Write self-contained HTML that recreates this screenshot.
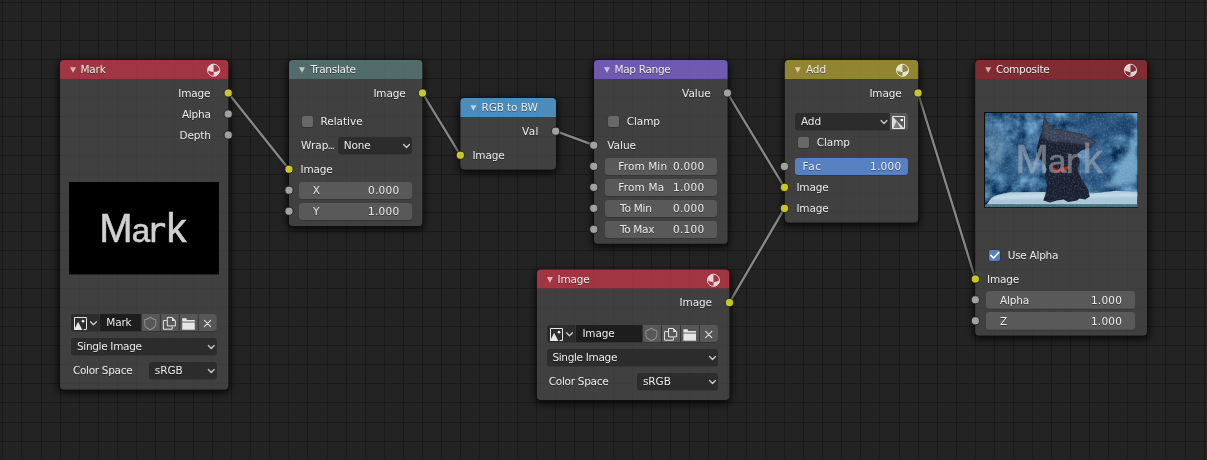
<!DOCTYPE html>
<html lang="en"><head><meta charset="utf-8"><title>Node Editor</title>
<style>html,body{margin:0;padding:0;background:#232323;overflow:hidden}svg{display:block}.t{font-family:"DejaVu Sans","Liberation Sans",sans-serif;font-size:10.5px;fill:#ececec}.ts{filter:drop-shadow(0 1px 0.4px rgba(0,0,0,0.36))}</style></head><body>
<svg width="1207" height="460" viewBox="0 0 1207 460">
<defs><filter id="sh" x="-20%" y="-20%" width="140%" height="140%"><feGaussianBlur stdDeviation="3.6"/></filter><filter id="bl1" x="-30%" y="-30%" width="160%" height="160%"><feGaussianBlur stdDeviation="0.9"/></filter><filter id="mott" x="0" y="0" width="100%" height="100%" color-interpolation-filters="sRGB"><feTurbulence type="fractalNoise" baseFrequency="0.075" numOctaves="3" seed="11"/><feColorMatrix type="matrix" values="0.7 0 0 0 -0.14  0.8 0 0 0 -0.01  0.8 0 0 0 0.15  0 0 0 0 1"/></filter><filter id="bl2" x="-30%" y="-30%" width="160%" height="160%"><feGaussianBlur stdDeviation="2.2"/></filter><filter id="noise" x="0" y="0" width="100%" height="100%" color-interpolation-filters="sRGB"><feTurbulence type="fractalNoise" baseFrequency="0.55" numOctaves="2" seed="7"/><feColorMatrix type="matrix" values="0 0 0 0 0.8  0 0 0 0 0.9  0 0 0 0 1  0 0 0 2.2 -1"/></filter><linearGradient id="skyg" x1="0" y1="0" x2="1" y2="0.6"><stop offset="0" stop-color="#41729a"/><stop offset="0.45" stop-color="#356790"/><stop offset="0.75" stop-color="#2a5982"/><stop offset="1" stop-color="#3f77a2"/></linearGradient></defs>
<rect width="1207" height="460" fill="#232323"/>
<g fill="#1a1a1a" shape-rendering="crispEdges"><rect x="2" y="0" width="1" height="460"/><rect x="21" y="0" width="1" height="460"/><rect x="41" y="0" width="1" height="460"/><rect x="60" y="0" width="1" height="460"/><rect x="79" y="0" width="1" height="460"/><rect x="98" y="0" width="1" height="460"/><rect x="117" y="0" width="1" height="460"/><rect x="136" y="0" width="1" height="460"/><rect x="155" y="0" width="1" height="460"/><rect x="174" y="0" width="1" height="460"/><rect x="193" y="0" width="1" height="460"/><rect x="212" y="0" width="1" height="460"/><rect x="231" y="0" width="1" height="460"/><rect x="250" y="0" width="1" height="460"/><rect x="269" y="0" width="1" height="460"/><rect x="288" y="0" width="1" height="460"/><rect x="307" y="0" width="1" height="460"/><rect x="327" y="0" width="1" height="460"/><rect x="346" y="0" width="1" height="460"/><rect x="365" y="0" width="1" height="460"/><rect x="384" y="0" width="1" height="460"/><rect x="403" y="0" width="1" height="460"/><rect x="422" y="0" width="1" height="460"/><rect x="441" y="0" width="1" height="460"/><rect x="460" y="0" width="1" height="460"/><rect x="479" y="0" width="1" height="460"/><rect x="498" y="0" width="1" height="460"/><rect x="517" y="0" width="1" height="460"/><rect x="536" y="0" width="1" height="460"/><rect x="555" y="0" width="1" height="460"/><rect x="574" y="0" width="1" height="460"/><rect x="593" y="0" width="1" height="460"/><rect x="613" y="0" width="1" height="460"/><rect x="632" y="0" width="1" height="460"/><rect x="651" y="0" width="1" height="460"/><rect x="670" y="0" width="1" height="460"/><rect x="689" y="0" width="1" height="460"/><rect x="708" y="0" width="1" height="460"/><rect x="727" y="0" width="1" height="460"/><rect x="746" y="0" width="1" height="460"/><rect x="765" y="0" width="1" height="460"/><rect x="784" y="0" width="1" height="460"/><rect x="803" y="0" width="1" height="460"/><rect x="822" y="0" width="1" height="460"/><rect x="841" y="0" width="1" height="460"/><rect x="860" y="0" width="1" height="460"/><rect x="879" y="0" width="1" height="460"/><rect x="899" y="0" width="1" height="460"/><rect x="918" y="0" width="1" height="460"/><rect x="937" y="0" width="1" height="460"/><rect x="956" y="0" width="1" height="460"/><rect x="975" y="0" width="1" height="460"/><rect x="994" y="0" width="1" height="460"/><rect x="1013" y="0" width="1" height="460"/><rect x="1032" y="0" width="1" height="460"/><rect x="1051" y="0" width="1" height="460"/><rect x="1070" y="0" width="1" height="460"/><rect x="1089" y="0" width="1" height="460"/><rect x="1108" y="0" width="1" height="460"/><rect x="1127" y="0" width="1" height="460"/><rect x="1146" y="0" width="1" height="460"/><rect x="1165" y="0" width="1" height="460"/><rect x="1185" y="0" width="1" height="460"/><rect x="1204" y="0" width="1" height="460"/><rect x="0" y="2" width="1207" height="1"/><rect x="0" y="21" width="1207" height="1"/><rect x="0" y="40" width="1207" height="1"/><rect x="0" y="59" width="1207" height="1"/><rect x="0" y="78" width="1207" height="1"/><rect x="0" y="97" width="1207" height="1"/><rect x="0" y="116" width="1207" height="1"/><rect x="0" y="136" width="1207" height="1"/><rect x="0" y="155" width="1207" height="1"/><rect x="0" y="174" width="1207" height="1"/><rect x="0" y="193" width="1207" height="1"/><rect x="0" y="212" width="1207" height="1"/><rect x="0" y="231" width="1207" height="1"/><rect x="0" y="250" width="1207" height="1"/><rect x="0" y="269" width="1207" height="1"/><rect x="0" y="288" width="1207" height="1"/><rect x="0" y="307" width="1207" height="1"/><rect x="0" y="326" width="1207" height="1"/><rect x="0" y="345" width="1207" height="1"/><rect x="0" y="364" width="1207" height="1"/><rect x="0" y="383" width="1207" height="1"/><rect x="0" y="402" width="1207" height="1"/><rect x="0" y="422" width="1207" height="1"/><rect x="0" y="441" width="1207" height="1"/></g>
<g><line x1="228.2" y1="93" x2="289" y2="169.2" stroke="#161616" stroke-width="4" stroke-linecap="round" opacity="0.65"/><line x1="228.2" y1="93" x2="289" y2="169.2" stroke="#888888" stroke-width="2.3" stroke-linecap="round"/>
<line x1="422.4" y1="93" x2="460.4" y2="155.2" stroke="#161616" stroke-width="4" stroke-linecap="round" opacity="0.65"/><line x1="422.4" y1="93" x2="460.4" y2="155.2" stroke="#888888" stroke-width="2.3" stroke-linecap="round"/>
<line x1="555.8" y1="131.2" x2="593.8" y2="145.2" stroke="#161616" stroke-width="4" stroke-linecap="round" opacity="0.65"/><line x1="555.8" y1="131.2" x2="593.8" y2="145.2" stroke="#888888" stroke-width="2.3" stroke-linecap="round"/>
<line x1="727.4" y1="93" x2="784.5" y2="187.4" stroke="#161616" stroke-width="4" stroke-linecap="round" opacity="0.65"/><line x1="727.4" y1="93" x2="784.5" y2="187.4" stroke="#888888" stroke-width="2.3" stroke-linecap="round"/>
<line x1="729.4" y1="302.6" x2="784.5" y2="208.4" stroke="#161616" stroke-width="4" stroke-linecap="round" opacity="0.65"/><line x1="729.4" y1="302.6" x2="784.5" y2="208.4" stroke="#888888" stroke-width="2.3" stroke-linecap="round"/>
<line x1="918" y1="93" x2="975.4" y2="279" stroke="#161616" stroke-width="4" stroke-linecap="round" opacity="0.65"/><line x1="918" y1="93" x2="975.4" y2="279" stroke="#888888" stroke-width="2.3" stroke-linecap="round"/></g>
<g><clipPath id="nc0"><path clip-rule="evenodd" d="M0,0 H1207 V460 H0 Z M64,60 H224.3 A4,4 0 0 1 228.3,64 V385.5 A4,4 0 0 1 224.3,389.5 H64 A4,4 0 0 1 60,385.5 V64 A4,4 0 0 1 64,60 Z"/></clipPath>
<g clip-path="url(#nc0)"><rect x="58" y="61" width="172.3" height="332.5" rx="6" fill="#000" opacity="0.72" filter="url(#sh)"/></g>
<path d="M60,79 H228.3 V385.5 A4,4 0 0 1 224.3,389.5 H64 A4,4 0 0 1 60,385.5 V79 Z" fill="rgba(76,76,76,0.71)"/>
<path d="M64,60 H224.3 A4,4 0 0 1 228.3,64 V79 H60 V64 A4,4 0 0 1 64,60 Z" fill="#c53b4b" fill-opacity="0.78"/>
<path d="M70,67.2 h6 l-3,5.6 Z" fill="#fff" fill-opacity="0.62"/>
<g transform="translate(213.6,70.2)" fill="#f4f4f4" fill-opacity="0.84"><circle r="6.05" fill="none" stroke="#f4f4f4" stroke-opacity="0.84" stroke-width="1"/><path d="M0,-6.05 A6.05,6.05 0 0 0 -6.05,0 Q-3.63,1.7 0,1.9 Z"/><path d="M0,6.05 A6.05,6.05 0 0 0 6.05,0 Q3.63,1.7 0,1.9 Z"/></g>
<clipPath id="nc1"><path clip-rule="evenodd" d="M0,0 H1207 V460 H0 Z M293,60 H418.4 A4,4 0 0 1 422.4,64 V222 A4,4 0 0 1 418.4,226 H293 A4,4 0 0 1 289,222 V64 A4,4 0 0 1 293,60 Z"/></clipPath>
<g clip-path="url(#nc1)"><rect x="287" y="61" width="137.4" height="169" rx="6" fill="#000" opacity="0.72" filter="url(#sh)"/></g>
<path d="M289,79 H422.4 V222 A4,4 0 0 1 418.4,226 H293 A4,4 0 0 1 289,222 V79 Z" fill="rgba(76,76,76,0.71)"/>
<path d="M293,60 H418.4 A4,4 0 0 1 422.4,64 V79 H289 V64 A4,4 0 0 1 293,60 Z" fill="#5f817f" fill-opacity="0.78"/>
<path d="M299,67.2 h6 l-3,5.6 Z" fill="#fff" fill-opacity="0.62"/>
<clipPath id="nc2"><path clip-rule="evenodd" d="M0,0 H1207 V460 H0 Z M464.4,98 H552 A4,4 0 0 1 556,102 V165.6 A4,4 0 0 1 552,169.6 H464.4 A4,4 0 0 1 460.4,165.6 V102 A4,4 0 0 1 464.4,98 Z"/></clipPath>
<g clip-path="url(#nc2)"><rect x="458.4" y="99" width="99.6" height="74.6" rx="6" fill="#000" opacity="0.72" filter="url(#sh)"/></g>
<path d="M460.4,117 H556 V165.6 A4,4 0 0 1 552,169.6 H464.4 A4,4 0 0 1 460.4,165.6 V117 Z" fill="rgba(76,76,76,0.71)"/>
<path d="M464.4,98 H552 A4,4 0 0 1 556,102 V117 H460.4 V102 A4,4 0 0 1 464.4,98 Z" fill="#58abe5" fill-opacity="0.78"/>
<path d="M470.4,105.2 h6 l-3,5.6 Z" fill="#fff" fill-opacity="0.62"/>
<clipPath id="nc3"><path clip-rule="evenodd" d="M0,0 H1207 V460 H0 Z M598,60 H723.6 A4,4 0 0 1 727.6,64 V239.8 A4,4 0 0 1 723.6,243.8 H598 A4,4 0 0 1 594,239.8 V64 A4,4 0 0 1 598,60 Z"/></clipPath>
<g clip-path="url(#nc3)"><rect x="592" y="61" width="137.6" height="186.8" rx="6" fill="#000" opacity="0.72" filter="url(#sh)"/></g>
<path d="M594,79 H727.6 V239.8 A4,4 0 0 1 723.6,243.8 H598 A4,4 0 0 1 594,239.8 V79 Z" fill="rgba(76,76,76,0.71)"/>
<path d="M598,60 H723.6 A4,4 0 0 1 727.6,64 V79 H594 V64 A4,4 0 0 1 598,60 Z" fill="#866ada" fill-opacity="0.78"/>
<path d="M604,67.2 h6 l-3,5.6 Z" fill="#fff" fill-opacity="0.62"/>
<clipPath id="nc4"><path clip-rule="evenodd" d="M0,0 H1207 V460 H0 Z M788.8,60 H914.2 A4,4 0 0 1 918.2,64 V218.6 A4,4 0 0 1 914.2,222.6 H788.8 A4,4 0 0 1 784.8,218.6 V64 A4,4 0 0 1 788.8,60 Z"/></clipPath>
<g clip-path="url(#nc4)"><rect x="782.8" y="61" width="137.4" height="165.6" rx="6" fill="#000" opacity="0.72" filter="url(#sh)"/></g>
<path d="M784.8,79 H918.2 V218.6 A4,4 0 0 1 914.2,222.6 H788.8 A4,4 0 0 1 784.8,218.6 V79 Z" fill="rgba(76,76,76,0.71)"/>
<path d="M788.8,60 H914.2 A4,4 0 0 1 918.2,64 V79 H784.8 V64 A4,4 0 0 1 788.8,60 Z" fill="#b1a236" fill-opacity="0.78"/>
<path d="M794.8,67.2 h6 l-3,5.6 Z" fill="#fff" fill-opacity="0.62"/>
<g transform="translate(902.5,70.3)" fill="#f4f4f4" fill-opacity="0.84"><circle r="6.05" fill="none" stroke="#f4f4f4" stroke-opacity="0.84" stroke-width="1"/><path d="M0,-6.05 A6.05,6.05 0 0 0 -6.05,0 Q-3.63,1.7 0,1.9 Z"/><path d="M0,6.05 A6.05,6.05 0 0 0 6.05,0 Q3.63,1.7 0,1.9 Z"/></g>
<clipPath id="nc5"><path clip-rule="evenodd" d="M0,0 H1207 V460 H0 Z M979.2,60 H1143 A4,4 0 0 1 1147,64 V331.6 A4,4 0 0 1 1143,335.6 H979.2 A4,4 0 0 1 975.2,331.6 V64 A4,4 0 0 1 979.2,60 Z"/></clipPath>
<g clip-path="url(#nc5)"><rect x="973.2" y="61" width="175.8" height="278.6" rx="6" fill="#000" opacity="0.72" filter="url(#sh)"/></g>
<path d="M975.2,79 H1147 V331.6 A4,4 0 0 1 1143,335.6 H979.2 A4,4 0 0 1 975.2,331.6 V79 Z" fill="rgba(76,76,76,0.71)"/>
<path d="M979.2,60 H1143 A4,4 0 0 1 1147,64 V79 H975.2 V64 A4,4 0 0 1 979.2,60 Z" fill="#9c2f39" fill-opacity="0.78"/>
<path d="M985.2,67.2 h6 l-3,5.6 Z" fill="#fff" fill-opacity="0.62"/>
<g transform="translate(1130.5,70.3)" fill="#f4f4f4" fill-opacity="0.84"><circle r="6.05" fill="none" stroke="#f4f4f4" stroke-opacity="0.84" stroke-width="1"/><path d="M0,-6.05 A6.05,6.05 0 0 0 -6.05,0 Q-3.63,1.7 0,1.9 Z"/><path d="M0,6.05 A6.05,6.05 0 0 0 6.05,0 Q3.63,1.7 0,1.9 Z"/></g>
<clipPath id="nc6"><path clip-rule="evenodd" d="M0,0 H1207 V460 H0 Z M540.9,269.5 H725.3 A4,4 0 0 1 729.3,273.5 V396 A4,4 0 0 1 725.3,400 H540.9 A4,4 0 0 1 536.9,396 V273.5 A4,4 0 0 1 540.9,269.5 Z"/></clipPath>
<g clip-path="url(#nc6)"><rect x="534.9" y="270.5" width="196.4" height="133.5" rx="6" fill="#000" opacity="0.72" filter="url(#sh)"/></g>
<path d="M536.9,288.5 H729.3 V396 A4,4 0 0 1 725.3,400 H540.9 A4,4 0 0 1 536.9,396 V288.5 Z" fill="rgba(76,76,76,0.71)"/>
<path d="M540.9,269.5 H725.3 A4,4 0 0 1 729.3,273.5 V288.5 H536.9 V273.5 A4,4 0 0 1 540.9,269.5 Z" fill="#c53b4b" fill-opacity="0.78"/>
<path d="M546.9,277.1 h6 l-3,5.6 Z" fill="#fff" fill-opacity="0.62"/>
<g transform="translate(713.45,280.3)" fill="#f4f4f4" fill-opacity="0.84"><circle r="6.05" fill="none" stroke="#f4f4f4" stroke-opacity="0.84" stroke-width="1"/><path d="M0,-6.05 A6.05,6.05 0 0 0 -6.05,0 Q-3.63,1.7 0,1.9 Z"/><path d="M0,6.05 A6.05,6.05 0 0 0 6.05,0 Q3.63,1.7 0,1.9 Z"/></g></g>
<g><rect x="71" y="314.8" width="145.8" height="17" rx="3.2" fill="#303030" opacity="0.8"/>
<path d="M74.2,314 H99 V331 H74.2 A3.2,3.2 0 0 1 71,327.8 V317.2 A3.2,3.2 0 0 1 74.2,314 Z" fill="#2c2c2c"/>
<g transform="translate(74,317)"><path d="M9.6,12.5 H12.5 V0.5 H0.5 V12.5" fill="none" stroke="#e6e6e6" stroke-width="1"/><path d="M0,13 L4.1,4.8 L8.4,13 Z" fill="#e6e6e6"/><circle cx="9" cy="4.2" r="1.4" fill="#e6e6e6"/></g>
<path d="M90.6,321.7 L93.5,324.7 L96.4,321.7" fill="none" stroke="#cacaca" stroke-width="1.3" stroke-linecap="round" stroke-linejoin="round"/>
<rect x="100" y="314" width="40.8" height="17" rx="0" fill="#1d1d1d" />
<rect x="141.8" y="314" width="18" height="17" rx="0" fill="#575757" />
<rect x="160.8" y="314" width="18" height="17" rx="0" fill="#575757" />
<rect x="179.8" y="314" width="18" height="17" rx="0" fill="#575757" />
<path d="M198.8,314 H213.6 A3.2,3.2 0 0 1 216.8,317.2 V327.8 A3.2,3.2 0 0 1 213.6,331 H198.8 V314 Z" fill="#575757"/>
<path d="M150.2,317.3 Q152.8,319.4 155.7,319.7 V324.4 Q155.3,327.6 150.2,329.7 Q145.1,327.6 144.7,324.4 V319.7 Q147.6,319.4 150.2,317.3 Z" fill="none" stroke="#8c8c8c" stroke-width="1.1" stroke-linejoin="round"/>
<g transform="translate(160.8,314)" fill="none" stroke="#e6e6e6" stroke-width="1"><path d="M6,6.6 H2.6 V15.2 H11.4 V12.4"/><path d="M6.5,3.5 H11.4 L14.6,6.7 V11.9 H6.5 Z"/><path d="M11.2,3.5 V6.9 H14.6 Z" fill="#e6e6e6" stroke="none"/></g>
<g transform="translate(179.8,314)" fill="#e6e6e6"><path d="M2.4,4.2 H6.8 V6 H15 V7.4 H2.4 Z"/><path d="M2.4,7.4 H15 V8.6 H2.4 Z" fill="#b4b4b4"/><rect x="2.4" y="8.8" width="12.6" height="6.9"/></g>
<path d="M204.4,320.4 l6.2,6.2 M210.6,320.4 l-6.2,6.2" stroke="#dcdcdc" stroke-width="1.15" stroke-linecap="round"/>
<path d="M74.2,338.8 H213.6 A3.2,3.2 0 0 1 216.8,342 V352.6 A3.2,3.2 0 0 1 213.6,355.8 H74.2 A3.2,3.2 0 0 1 71,352.6 V342 A3.2,3.2 0 0 1 74.2,338.8 Z" fill="#333" opacity="0.8"/>
<path d="M74.2,338 H213.6 A3.2,3.2 0 0 1 216.8,341.2 V351.8 A3.2,3.2 0 0 1 213.6,355 H74.2 A3.2,3.2 0 0 1 71,351.8 V341.2 A3.2,3.2 0 0 1 74.2,338 Z" fill="#2c2c2c"/>
<path d="M208.4,345.5 L211.3,348.5 L214.2,345.5" fill="none" stroke="#cacaca" stroke-width="1.3" stroke-linecap="round" stroke-linejoin="round"/>
<path d="M152.2,362.8 H213.6 A3.2,3.2 0 0 1 216.8,366 V376.6 A3.2,3.2 0 0 1 213.6,379.8 H152.2 A3.2,3.2 0 0 1 149,376.6 V366 A3.2,3.2 0 0 1 152.2,362.8 Z" fill="#333" opacity="0.8"/>
<path d="M152.2,362 H213.6 A3.2,3.2 0 0 1 216.8,365.2 V375.8 A3.2,3.2 0 0 1 213.6,379 H152.2 A3.2,3.2 0 0 1 149,375.8 V365.2 A3.2,3.2 0 0 1 152.2,362 Z" fill="#2c2c2c"/>
<path d="M208.4,369.5 L211.3,372.5 L214.2,369.5" fill="none" stroke="#cacaca" stroke-width="1.3" stroke-linecap="round" stroke-linejoin="round"/>
<rect x="301.7" y="116.2" width="11.6" height="11.7" rx="2.4" fill="#2f2f2f" opacity="0.85"/>
<rect x="302" y="116" width="11" height="11" rx="2" fill="#686868" />
<path d="M341.5,137.8 H408.8 A3.2,3.2 0 0 1 412,141 V151.6 A3.2,3.2 0 0 1 408.8,154.8 H341.5 A3.2,3.2 0 0 1 338.3,151.6 V141 A3.2,3.2 0 0 1 341.5,137.8 Z" fill="#333" opacity="0.8"/>
<path d="M341.5,137 H408.8 A3.2,3.2 0 0 1 412,140.2 V150.8 A3.2,3.2 0 0 1 408.8,154 H341.5 A3.2,3.2 0 0 1 338.3,150.8 V140.2 A3.2,3.2 0 0 1 341.5,137 Z" fill="#2c2c2c"/>
<path d="M403.6,144.5 L406.5,147.5 L409.4,144.5" fill="none" stroke="#cacaca" stroke-width="1.3" stroke-linecap="round" stroke-linejoin="round"/>
<rect x="299" y="182.8" width="113" height="17" rx="3.2" fill="#2e2e2e" opacity="0.7"/>
<rect x="299" y="182" width="113" height="17" rx="3.2" fill="#595959" />
<rect x="299" y="203.8" width="113" height="17" rx="3.2" fill="#2e2e2e" opacity="0.7"/>
<rect x="299" y="203" width="113" height="17" rx="3.2" fill="#595959" />
<rect x="607.7" y="116.2" width="11.6" height="11.7" rx="2.4" fill="#2f2f2f" opacity="0.85"/>
<rect x="608" y="116" width="11" height="11" rx="2" fill="#686868" />
<rect x="605" y="158.8" width="112" height="17" rx="3.2" fill="#2e2e2e" opacity="0.7"/>
<rect x="605" y="158" width="112" height="17" rx="3.2" fill="#595959" />
<rect x="605" y="179.8" width="112" height="17" rx="3.2" fill="#2e2e2e" opacity="0.7"/>
<rect x="605" y="179" width="112" height="17" rx="3.2" fill="#595959" />
<rect x="605" y="200.8" width="112" height="17" rx="3.2" fill="#2e2e2e" opacity="0.7"/>
<rect x="605" y="200" width="112" height="17" rx="3.2" fill="#595959" />
<rect x="605" y="221.8" width="112" height="17" rx="3.2" fill="#2e2e2e" opacity="0.7"/>
<rect x="605" y="221" width="112" height="17" rx="3.2" fill="#595959" />
<path d="M798.2,113.8 H889.5 V130.8 H798.2 A3.2,3.2 0 0 1 795,127.6 V117 A3.2,3.2 0 0 1 798.2,113.8 Z" fill="#333" opacity="0.8"/>
<path d="M798.2,113 H889.5 V130 H798.2 A3.2,3.2 0 0 1 795,126.8 V116.2 A3.2,3.2 0 0 1 798.2,113 Z" fill="#2c2c2c"/>
<path d="M881.1,120.5 L884,123.5 L886.9,120.5" fill="none" stroke="#cacaca" stroke-width="1.3" stroke-linecap="round" stroke-linejoin="round"/>
<path d="M890,113 H904.8 A3.2,3.2 0 0 1 908,116.2 V126.8 A3.2,3.2 0 0 1 904.8,130 H890 V113 Z" fill="#575757"/>
<g transform="translate(892,116)"><path d="M0.5,0.5 H12.5 V12.5 H0.5 Z" fill="none" stroke="#e8e8e8" stroke-width="1"/><path d="M1,1 L12,12 H1 Z" fill="#dcdcdc"/><path d="M1.4,12 L4.4,5 L8.6,12 Z" fill="#7c7c7c"/><circle cx="9.8" cy="4.1" r="1.35" fill="#f0f0f0"/></g>
<rect x="797.7" y="137.2" width="11.6" height="11.7" rx="2.4" fill="#2f2f2f" opacity="0.85"/>
<rect x="798" y="137" width="11" height="11" rx="2" fill="#686868" />
<rect x="795" y="158.8" width="113" height="17" rx="3.2" fill="#2e2e2e" opacity="0.7"/>
<rect x="795" y="158" width="113" height="17" rx="3.2" fill="#5680c2" />
<rect x="988.6" y="249.6" width="11.8" height="11.8" rx="2.4" fill="#30343c" />
<rect x="989" y="250" width="11" height="11" rx="2" fill="#5680c2" />
<path d="M990.9,255.4 L993.6,258.1 L998.7,252.4" fill="none" stroke="#fff" stroke-width="1.5" stroke-linecap="round" stroke-linejoin="round"/>
<rect x="986" y="291.9" width="149" height="17.6" rx="3.2" fill="#2e2e2e" opacity="0.7"/>
<rect x="986" y="291.1" width="149" height="17.6" rx="3.2" fill="#595959" />
<rect x="986" y="312.9" width="149" height="17.6" rx="3.2" fill="#2e2e2e" opacity="0.7"/>
<rect x="986" y="312.1" width="149" height="17.6" rx="3.2" fill="#595959" />
<rect x="547" y="325.8" width="171" height="17" rx="3.2" fill="#303030" opacity="0.8"/>
<path d="M550.2,325 H575 V342 H550.2 A3.2,3.2 0 0 1 547,338.8 V328.2 A3.2,3.2 0 0 1 550.2,325 Z" fill="#2c2c2c"/>
<g transform="translate(550,328)"><path d="M9.6,12.5 H12.5 V0.5 H0.5 V12.5" fill="none" stroke="#e6e6e6" stroke-width="1"/><path d="M0,13 L4.1,4.8 L8.4,13 Z" fill="#e6e6e6"/><circle cx="9" cy="4.2" r="1.4" fill="#e6e6e6"/></g>
<path d="M566.6,332.7 L569.5,335.7 L572.4,332.7" fill="none" stroke="#cacaca" stroke-width="1.3" stroke-linecap="round" stroke-linejoin="round"/>
<rect x="576" y="325" width="66" height="17" rx="0" fill="#1d1d1d" />
<rect x="643" y="325" width="18" height="17" rx="0" fill="#575757" />
<rect x="662" y="325" width="18" height="17" rx="0" fill="#575757" />
<rect x="681" y="325" width="18" height="17" rx="0" fill="#575757" />
<path d="M700,325 H714.8 A3.2,3.2 0 0 1 718,328.2 V338.8 A3.2,3.2 0 0 1 714.8,342 H700 V325 Z" fill="#575757"/>
<path d="M651.4,328.3 Q654,330.4 656.9,330.7 V335.4 Q656.5,338.6 651.4,340.7 Q646.3,338.6 645.9,335.4 V330.7 Q648.8,330.4 651.4,328.3 Z" fill="none" stroke="#8c8c8c" stroke-width="1.1" stroke-linejoin="round"/>
<g transform="translate(662,325)" fill="none" stroke="#e6e6e6" stroke-width="1"><path d="M6,6.6 H2.6 V15.2 H11.4 V12.4"/><path d="M6.5,3.5 H11.4 L14.6,6.7 V11.9 H6.5 Z"/><path d="M11.2,3.5 V6.9 H14.6 Z" fill="#e6e6e6" stroke="none"/></g>
<g transform="translate(681,325)" fill="#e6e6e6"><path d="M2.4,4.2 H6.8 V6 H15 V7.4 H2.4 Z"/><path d="M2.4,7.4 H15 V8.6 H2.4 Z" fill="#b4b4b4"/><rect x="2.4" y="8.8" width="12.6" height="6.9"/></g>
<path d="M705.6,331.4 l6.2,6.2 M711.8,331.4 l-6.2,6.2" stroke="#dcdcdc" stroke-width="1.15" stroke-linecap="round"/>
<path d="M550.2,349.8 H714.8 A3.2,3.2 0 0 1 718,353 V363.6 A3.2,3.2 0 0 1 714.8,366.8 H550.2 A3.2,3.2 0 0 1 547,363.6 V353 A3.2,3.2 0 0 1 550.2,349.8 Z" fill="#333" opacity="0.8"/>
<path d="M550.2,349 H714.8 A3.2,3.2 0 0 1 718,352.2 V362.8 A3.2,3.2 0 0 1 714.8,366 H550.2 A3.2,3.2 0 0 1 547,362.8 V352.2 A3.2,3.2 0 0 1 550.2,349 Z" fill="#2c2c2c"/>
<path d="M709.6,356.5 L712.5,359.5 L715.4,356.5" fill="none" stroke="#cacaca" stroke-width="1.3" stroke-linecap="round" stroke-linejoin="round"/>
<path d="M640.2,373.8 H714.8 A3.2,3.2 0 0 1 718,377 V387.6 A3.2,3.2 0 0 1 714.8,390.8 H640.2 A3.2,3.2 0 0 1 637,387.6 V377 A3.2,3.2 0 0 1 640.2,373.8 Z" fill="#333" opacity="0.8"/>
<path d="M640.2,373 H714.8 A3.2,3.2 0 0 1 718,376.2 V386.8 A3.2,3.2 0 0 1 714.8,390 H640.2 A3.2,3.2 0 0 1 637,386.8 V376.2 A3.2,3.2 0 0 1 640.2,373 Z" fill="#2c2c2c"/>
<path d="M709.6,380.5 L712.5,383.5 L715.4,380.5" fill="none" stroke="#cacaca" stroke-width="1.3" stroke-linecap="round" stroke-linejoin="round"/></g>
<g style="opacity:0.999"><rect x="69" y="182" width="150" height="92.4" fill="#000"/><text y="241.7" font-family="'Liberation Sans', sans-serif" font-size="40" fill="#d0d0d0" stroke="#d0d0d0" stroke-width="0.55" ><tspan x="99.3">M</tspan><tspan x="131.7" font-size="33.2">a</tspan><tspan x="146.0" font-size="33.6" font-family="'DejaVu Sans Mono', monospace">r</tspan><tspan x="166.4">k</tspan></text></g>
<g>
<clipPath id="cp"><rect x="985" y="113" width="152.5" height="94"/></clipPath>
<rect x="984" y="112" width="154" height="95.6" fill="#0a0b0e"/>
<g clip-path="url(#cp)">
<rect x="984" y="112" width="154" height="96" fill="#3c6f9a" filter="url(#mott)"/>
<g filter="url(#bl2)">
<ellipse cx="1105" cy="124" rx="32" ry="14" fill="#214a73" opacity="0.75"/>
<ellipse cx="1098" cy="166" rx="12" ry="26" fill="#295680" opacity="0.7"/>
<ellipse cx="1012" cy="164" rx="14" ry="20" fill="#27517a" opacity="0.6"/>
<ellipse cx="995" cy="150" rx="7" ry="22" fill="#7fabc9" opacity="0.55"/>
<polygon points="1137.5,130.6 1137.5,183.7 1106.5,187.5 1115.1,172.4 1126.4,153.2" fill="#73a8ca" opacity="0.95"/>
</g>
<polygon points="984.5,207.4 991.3,197.9 998.1,194.8 1009.4,192.3 1043.3,192.0 1093.0,193.4 1115.6,190.7 1137.5,192.0 1137.5,207.4 984.5,207.4" fill="#a9c7d8"/>
<polygon points="993.6,196.6 1025.2,193.4 1074.9,194.3 1124.6,193.0 1137.5,193.9 1137.5,196.6 1070.4,197.9 993.6,199.3" fill="#d3e4ee" opacity="0.7" filter="url(#bl1)"/>
<rect x="984" y="204.2" width="154" height="4" fill="#2c5d66" opacity="0.8"/>
<polygon points="1043.9,116.6 1047.8,122.0 1054.1,128.8 1063.6,130.1 1074.9,132.4 1086.2,135.1 1096.4,141.9 1090.7,147.8 1082.1,150.0 1077.6,153.6 1079.9,162.2 1077.2,169.0 1079.9,175.8 1083.5,182.6 1088.0,189.3 1089.8,196.6 1085.3,199.5 1079.4,198.4 1077.2,200.6 1068.1,202.0 1063.6,199.5 1056.8,200.6 1050.0,202.4 1043.3,200.6 1045.5,193.9 1046.9,184.8 1044.4,175.8 1046.7,169.0 1043.3,162.2 1037.6,156.6 1036.5,148.7 1039.2,139.6 1042.1,130.6" fill="#1a2030"/>
<polygon points="1043.9,116.6 1047.8,122.0 1054.1,128.8 1063.6,130.1 1074.9,132.4 1086.2,135.1 1096.4,141.9 1090.7,146.4 1079.4,144.2 1065.9,141.9 1052.3,141.9 1042.1,137.4" fill="#4a5266" opacity="0.7" filter="url(#bl1)"/>
<polygon points="1051.8,167.2 1059.1,169.5 1068.6,165.8 1069.5,168.6 1059.5,173.1 1052.8,170.4" fill="#a8281f"/>
<rect x="984" y="112" width="154" height="96" filter="url(#noise)" opacity="0.2"/>
</g>
<text y="172.8" font-family="'Liberation Sans', sans-serif" font-size="40" fill="#b4b4ba" stroke="#b4b4ba" stroke-width="0.55" opacity="0.55"><tspan x="1015.6">M</tspan><tspan x="1048.0" font-size="33.2">a</tspan><tspan x="1062.3" font-size="33.6" font-family="'DejaVu Sans Mono', monospace">r</tspan><tspan x="1082.7">k</tspan></text>
</g>
<g><circle cx="228.2" cy="93" r="4.05" fill="#c7c729" stroke="#1b1b1b" stroke-width="0.8"/>
<circle cx="228.2" cy="114" r="4.05" fill="#a1a1a1" stroke="#1b1b1b" stroke-width="0.8"/>
<circle cx="228.2" cy="135" r="4.05" fill="#a1a1a1" stroke="#1b1b1b" stroke-width="0.8"/>
<circle cx="422.4" cy="93" r="4.05" fill="#c7c729" stroke="#1b1b1b" stroke-width="0.8"/>
<circle cx="289" cy="169.2" r="4.05" fill="#c7c729" stroke="#1b1b1b" stroke-width="0.8"/>
<circle cx="289" cy="190.2" r="4.05" fill="#a1a1a1" stroke="#1b1b1b" stroke-width="0.8"/>
<circle cx="289" cy="211.2" r="4.05" fill="#a1a1a1" stroke="#1b1b1b" stroke-width="0.8"/>
<circle cx="555.6" cy="131.2" r="4.05" fill="#a1a1a1" stroke="#1b1b1b" stroke-width="0.8"/>
<circle cx="460.4" cy="155.2" r="4.05" fill="#c7c729" stroke="#1b1b1b" stroke-width="0.8"/>
<circle cx="727.4" cy="93" r="4.05" fill="#a1a1a1" stroke="#1b1b1b" stroke-width="0.8"/>
<circle cx="593.8" cy="145.2" r="4.05" fill="#a1a1a1" stroke="#1b1b1b" stroke-width="0.8"/>
<circle cx="593.8" cy="166.3" r="4.05" fill="#a1a1a1" stroke="#1b1b1b" stroke-width="0.8"/>
<circle cx="593.8" cy="187.3" r="4.05" fill="#a1a1a1" stroke="#1b1b1b" stroke-width="0.8"/>
<circle cx="593.8" cy="208.3" r="4.05" fill="#a1a1a1" stroke="#1b1b1b" stroke-width="0.8"/>
<circle cx="593.8" cy="229.3" r="4.05" fill="#a1a1a1" stroke="#1b1b1b" stroke-width="0.8"/>
<circle cx="918" cy="93" r="4.05" fill="#c7c729" stroke="#1b1b1b" stroke-width="0.8"/>
<circle cx="784.5" cy="166.4" r="4.05" fill="#a1a1a1" stroke="#1b1b1b" stroke-width="0.8"/>
<circle cx="784.5" cy="187.4" r="4.05" fill="#c7c729" stroke="#1b1b1b" stroke-width="0.8"/>
<circle cx="784.5" cy="208.4" r="4.05" fill="#c7c729" stroke="#1b1b1b" stroke-width="0.8"/>
<circle cx="975.4" cy="279" r="4.05" fill="#c7c729" stroke="#1b1b1b" stroke-width="0.8"/>
<circle cx="975.4" cy="299.8" r="4.05" fill="#a1a1a1" stroke="#1b1b1b" stroke-width="0.8"/>
<circle cx="975.4" cy="320.8" r="4.05" fill="#a1a1a1" stroke="#1b1b1b" stroke-width="0.8"/>
<circle cx="729.4" cy="302.6" r="4.05" fill="#c7c729" stroke="#1b1b1b" stroke-width="0.8"/></g>
<g class="t ts">
<text x="80.50" y="72.6" letter-spacing="-0.192">Mark</text>
<text x="178.20" y="96.6" letter-spacing="-0.144">Image</text>
<text x="181.88" y="117.6" letter-spacing="-0.188">Alpha</text>
<text x="179.60" y="138.6" letter-spacing="-0.181">Depth</text>
<text x="106.30" y="326" letter-spacing="-0.192">Mark</text>
<text x="76.97" y="350" letter-spacing="-0.316">Single Image</text>
<text x="72.88" y="374" letter-spacing="-0.292">Color Space</text>
<text x="154.70" y="374" letter-spacing="-0.025">sRGB</text>
<text x="310.50" y="72.6" letter-spacing="-0.266">Translate</text>
<text x="373.40" y="96.6" letter-spacing="-0.144">Image</text>
<text x="320.40" y="125" letter-spacing="-0.021">Relative</text>
<text x="301.12" y="149">Wrap<tspan x="327.48" letter-spacing="-1.15">...</tspan></text>
<text x="343.70" y="149" letter-spacing="-0.125">None</text>
<text x="300.50" y="172.8" letter-spacing="-0.144">Image</text>
<text x="312.82" y="194">X</text>
<text x="367.97" y="194" letter-spacing="0.263">0.000</text>
<text x="313.00" y="215">Y</text>
<text x="367.97" y="215" letter-spacing="0.263">1.000</text>
<text x="481.50" y="110.6" letter-spacing="-0.094">RGB to BW</text>
<text x="522.08" y="134.8" letter-spacing="0.338">Val</text>
<text x="472.40" y="158.8" letter-spacing="-0.144">Image</text>
<text x="614.50" y="72.6" letter-spacing="-0.319">Map Range</text>
<text x="682.08" y="96.6" letter-spacing="-0.031">Value</text>
<text x="626.77" y="125" letter-spacing="-0.094">Clamp</text>
<text x="607.27" y="148.8" letter-spacing="-0.031">Value</text>
<text x="618.30" y="170" letter-spacing="0.111">From Min</text>
<text x="673.08" y="170" letter-spacing="0.263">0.000</text>
<text x="618.30" y="191" letter-spacing="0.171">From Ma</text>
<text x="673.08" y="191" letter-spacing="0.263">1.000</text>
<text x="620.00" y="212" letter-spacing="-0.225">To Min</text>
<text x="673.08" y="212" letter-spacing="0.263">0.000</text>
<text x="620.00" y="233" letter-spacing="-0.350">To Max</text>
<text x="673.08" y="233" letter-spacing="0.263">0.100</text>
<text x="805.88" y="72.6" letter-spacing="-0.025">Add</text>
<text x="869.40" y="96.6" letter-spacing="-0.144">Image</text>
<text x="800.88" y="125" letter-spacing="-0.025">Add</text>
<text x="816.77" y="146" letter-spacing="-0.094">Clamp</text>
<text x="802.40" y="170" letter-spacing="0.688">Fac</text>
<text x="869.98" y="170" letter-spacing="0.263">1.000</text>
<text x="796.40" y="191" letter-spacing="-0.144">Image</text>
<text x="796.40" y="212" letter-spacing="-0.144">Image</text>
<text x="995.88" y="72.6" letter-spacing="-0.272">Composite</text>
<text x="1007.73" y="259" letter-spacing="-0.263">Use Alpha</text>
<text x="987.00" y="282.6" letter-spacing="-0.144">Image</text>
<text x="1000.08" y="304" letter-spacing="-0.188">Alpha</text>
<text x="1090.88" y="304" letter-spacing="0.263">1.000</text>
<text x="1000.10" y="325">Z</text>
<text x="1090.88" y="325" letter-spacing="0.263">1.000</text>
<text x="557.50" y="283" letter-spacing="-0.144">Image</text>
<text x="679.60" y="306.2" letter-spacing="-0.144">Image</text>
<text x="582.40" y="337" letter-spacing="-0.144">Image</text>
<text x="552.38" y="361" letter-spacing="-0.316">Single Image</text>
<text x="548.77" y="385" letter-spacing="-0.292">Color Space</text>
<text x="642.90" y="385" letter-spacing="-0.025">sRGB</text>
</g>
</svg></body></html>
